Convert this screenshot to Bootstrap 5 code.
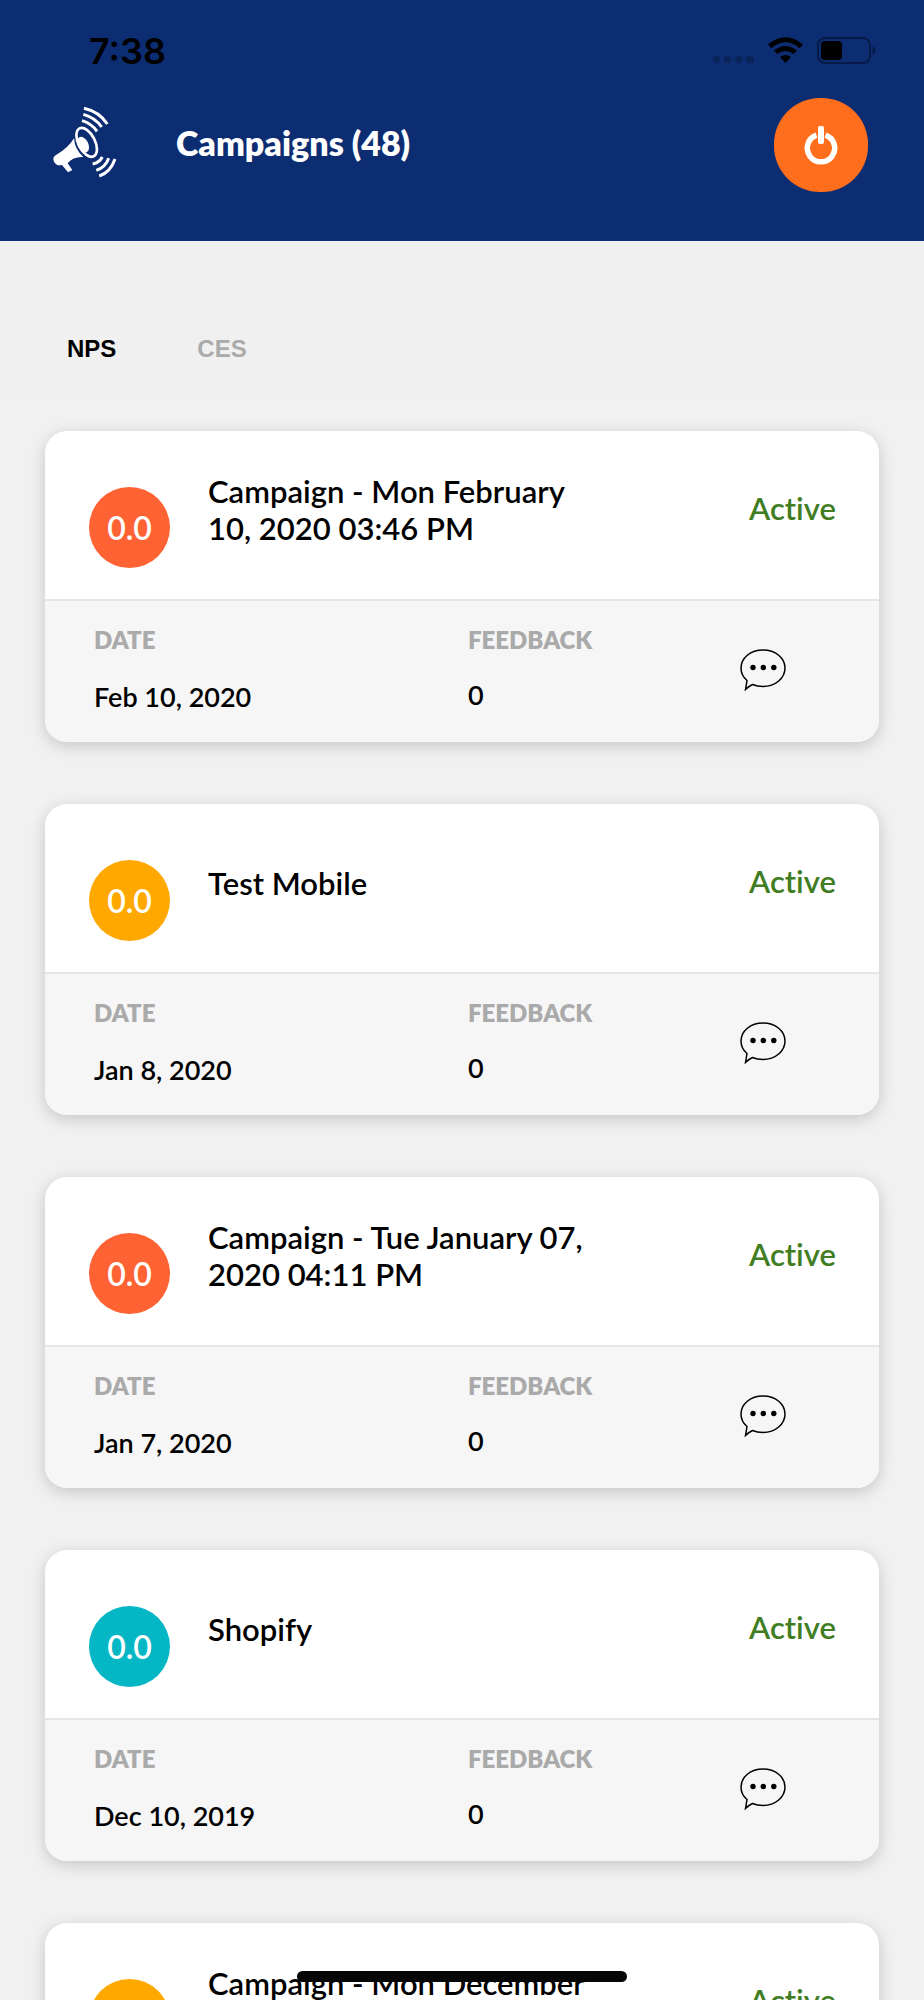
<!DOCTYPE html>
<html lang="en">
<head>
<meta charset="utf-8">
<meta name="viewport" content="width=device-width, initial-scale=1">
<title>Campaigns</title>
<link href="https://cdn.jsdelivr.net/npm/bootstrap@5.3.0/dist/css/bootstrap.min.css" rel="stylesheet">
<style>
  body { font-family: Lato, "Open Sans", sans-serif; font-variant-ligatures: none; color: #000; background: #f1f1f1; }
  .app-header { background: #0d2d73; padding: 0 48px 49px 40px; }
  .status-bar { height: 98px; padding: 4px 0 0 49px; }
  .clock { font: 600 36px/40px Inter, sans-serif; }
  .page-title { font-size: 34px; line-height: 40px; font-weight: 800; margin-left: 46px; }
  .power-btn { width: 94px; height: 94px; border-radius: 46px; background: #ff6e1c; }
  .tab-strip { background: #f0f0f0; height: 158px; padding: 85px 42px 0 42px; gap: 30px; }
  .tab-strip .nav-link { font: 700 24px/30px "Liberation Sans", sans-serif; color: #aaa; padding: 8px 26px 8px 25px; }
  .tab-strip .nav-link.active { color: #000; }
  .campaign-list { padding: 32px 45px 0; gap: 62px; }
  .campaign { border: 0; border-radius: 22px; box-shadow: 0 4px 16px rgba(0,0,0,.18); overflow: hidden; }
  .campaign-top { height: 168px; padding: 0 43px 0 44px; }
  .score { width: 81px; height: 81px; margin-top: 25px; font-size: 32px; font-weight: 600; color: #fff; }
  .score-low { background: #ff6333; }
  .score-mid { background: #ffa800; }
  .score-high { background: #05b7c5; }
  .campaign-name { font-size: 31px; line-height: 37px; font-weight: 600; width: 400px; margin: 0 auto 10px 38px; }
  .campaign-state { font-size: 31px; line-height: 36px; font-weight: 600; color: #417d22; margin-bottom: 14px; }
  .campaign-info { height: 143px; background: #f6f6f6; border-top: 2px solid #e6e6e6; padding: 24px 37px 0 49px; }
  .info-label { font-size: 24px; line-height: 30px; font-weight: 800; color: #aaa; }
  .info-value { font-size: 27px; line-height: 32px; font-weight: 600; margin: 26px 0 0; }
  .info-count { margin-top: 24px; }
  .info-chat { padding: 24px 56px 0 0; }
  .home-bar { width: 330px; height: 11px; bottom: 18px; background: #060606; }
</style>
</head>
<body>
<div class="vh-100 d-flex flex-column overflow-hidden position-relative">

  <header class="app-header flex-shrink-0">
    <div class="status-bar d-flex align-items-center">
      <span class="clock me-auto">7:38</span>
      <svg width="164" height="30" viewBox="0 0 164 30" aria-hidden="true">
        <g fill="#000" fill-opacity=".22"><rect x="1" y="20" width="7" height="7" rx="3"/><rect x="12" y="20" width="7" height="7" rx="3"/><rect x="23" y="20" width="7" height="7" rx="3"/><rect x="34" y="20" width="8" height="7" rx="3"/></g>
        <path d="M56 8.500Q73.500 -6 91 8.500L87.600 12.200Q73.500 .5 59.400 12.200ZM62 14.500Q73.500 5.500 85 14.500L81.600 18Q73.500 12 65.400 18ZM68 21Q73.500 17 79 21L73.500 27Z"/>
        <rect x="106" y="2" width="52" height="25" rx="7" fill="none" stroke="#071a47" stroke-width="2"/>
        <rect x="109" y="5" width="21" height="19" rx="4"/>
        <path d="M160.500 10Q166.500 14.500 160.500 19Z" fill="#071a47"/>
      </svg>
    </div>
    <div class="d-flex align-items-center pe-2">
      <svg class="mb-2" width="90" height="84" viewBox="0 24 270 252" fill="none" stroke="#fff" stroke-width="9" aria-hidden="true">
        <path d="M132 52Q177 62 202 99M130 70Q166 80 185 108M126 89Q154 97 171 121"/>
        <path d="M225 204Q212 243 178 255M206 202Q196 230 169 238M187 198Q178 215 158 219"/>
        <ellipse cx="140" cy="154" rx="25" ry="47" transform="rotate(-27 140 154)" stroke-width="8"/>
        <ellipse cx="129" cy="161" rx="16" ry="25" transform="rotate(-27 129 161)" fill="#fff" stroke="none"/>
        <path d="M102 142Q104 175 130 198Q100 196 83 217L97 237L84 244L66 222Q50 226 42 212Q36 199 48 192Q84 172 102 142Z" fill="#fff" stroke="none"/>
      </svg>
      <h1 class="page-title text-white mb-1 me-auto">Campaigns (48)</h1>
      <button type="button" class="power-btn border-0 p-0 d-flex align-items-center justify-content-center" aria-label="Log out">
        <svg width="36" height="42" viewBox="0 0 36 42" fill="none" stroke="#fff" aria-hidden="true">
          <path d="M13.500 11.200A13.700 13.700 0 1 0 22.500 11.200" stroke-width="5.500"/>
          <rect x="15" y="2" width="6" height="18" rx="2" fill="#fff" stroke="none"/>
        </svg>
      </button>
    </div>
  </header>

  <nav class="tab-strip nav flex-nowrap flex-shrink-0 align-items-start">
    <a class="nav-link active" href="#nps" aria-current="page">NPS</a>
    <a class="nav-link" href="#ces">CES</a>
  </nav>

  <svg class="d-none" aria-hidden="true">
    <symbol id="bubble" viewBox="0 0 46 42">
      <path d="M5.500 40.500L7 31.500Q1 26.500 1 19C1 9 10.500 1 23 1S45 9 45 19S35.500 37.500 23 37.500Q17 37.500 12.500 35.500Q9 37 5.500 40.500Z" fill="none" stroke="#000" stroke-width="1.500"/>
      <circle cx="13" cy="18.500" r="2.700"/><circle cx="23.300" cy="18.500" r="2.700"/><circle cx="33.800" cy="18.500" r="2.700"/>
    </symbol>
  </svg>

  <main class="campaign-list d-flex flex-column">
    <article class="campaign card flex-shrink-0">
      <div class="campaign-top d-flex align-items-center">
        <div class="score score-low rounded-circle d-flex align-items-center justify-content-center">0.0</div>
        <h2 class="campaign-name">Campaign - Mon February 10, 2020 03:46 PM</h2>
        <span class="campaign-state">Active</span>
      </div>
      <div class="campaign-info"><div class="row g-0">
        <div class="col-6"><div class="info-label">DATE</div><p class="info-value">Feb 10, 2020</p></div>
        <div class="col"><div class="info-label">FEEDBACK</div><p class="info-value info-count">0</p></div>
        <div class="col-auto info-chat"><svg width="46" height="42"><use href="#bubble"/></svg></div>
      </div></div>
    </article>

    <article class="campaign card flex-shrink-0">
      <div class="campaign-top d-flex align-items-center">
        <div class="score score-mid rounded-circle d-flex align-items-center justify-content-center">0.0</div>
        <h2 class="campaign-name">Test Mobile</h2>
        <span class="campaign-state">Active</span>
      </div>
      <div class="campaign-info"><div class="row g-0">
        <div class="col-6"><div class="info-label">DATE</div><p class="info-value">Jan 8, 2020</p></div>
        <div class="col"><div class="info-label">FEEDBACK</div><p class="info-value info-count">0</p></div>
        <div class="col-auto info-chat"><svg width="46" height="42"><use href="#bubble"/></svg></div>
      </div></div>
    </article>

    <article class="campaign card flex-shrink-0">
      <div class="campaign-top d-flex align-items-center">
        <div class="score score-low rounded-circle d-flex align-items-center justify-content-center">0.0</div>
        <h2 class="campaign-name">Campaign - Tue January 07, 2020 04:11 PM</h2>
        <span class="campaign-state">Active</span>
      </div>
      <div class="campaign-info"><div class="row g-0">
        <div class="col-6"><div class="info-label">DATE</div><p class="info-value">Jan 7, 2020</p></div>
        <div class="col"><div class="info-label">FEEDBACK</div><p class="info-value info-count">0</p></div>
        <div class="col-auto info-chat"><svg width="46" height="42"><use href="#bubble"/></svg></div>
      </div></div>
    </article>

    <article class="campaign card flex-shrink-0">
      <div class="campaign-top d-flex align-items-center">
        <div class="score score-high rounded-circle d-flex align-items-center justify-content-center">0.0</div>
        <h2 class="campaign-name">Shopify</h2>
        <span class="campaign-state">Active</span>
      </div>
      <div class="campaign-info"><div class="row g-0">
        <div class="col-6"><div class="info-label">DATE</div><p class="info-value">Dec 10, 2019</p></div>
        <div class="col"><div class="info-label">FEEDBACK</div><p class="info-value info-count">0</p></div>
        <div class="col-auto info-chat"><svg width="46" height="42"><use href="#bubble"/></svg></div>
      </div></div>
    </article>

    <article class="campaign card flex-shrink-0">
      <div class="campaign-top d-flex align-items-center">
        <div class="score score-mid rounded-circle"></div>
        <h2 class="campaign-name">Campaign - Mon December<br>&nbsp;</h2>
        <span class="campaign-state">Active</span>
      </div>
    </article>
  </main>

  <div class="home-bar rounded-pill position-absolute start-50 translate-middle-x"></div>
</div>
<script src="https://cdn.jsdelivr.net/npm/bootstrap@5.3.0/dist/js/bootstrap.bundle.min.js"></script>
</body>
</html>
